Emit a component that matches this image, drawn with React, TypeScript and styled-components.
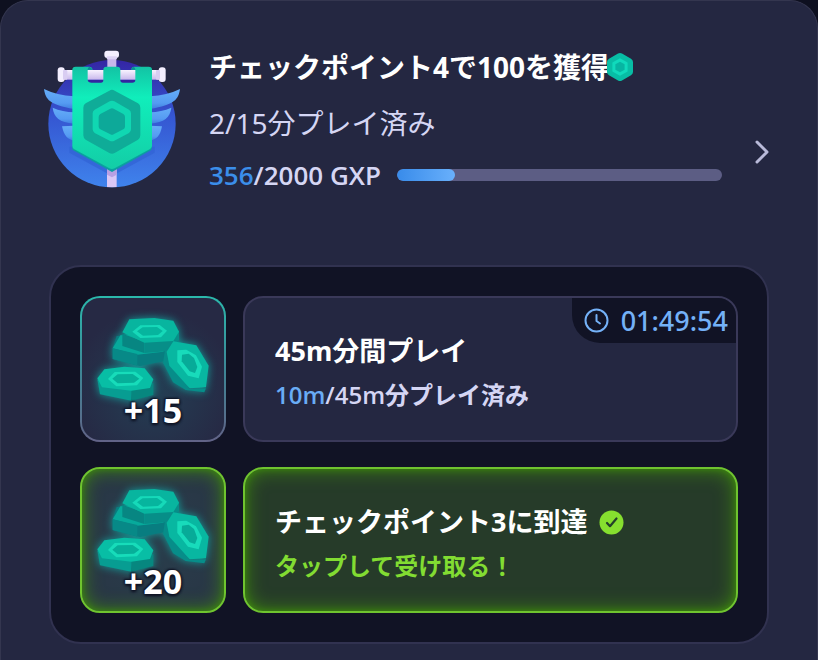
import React from "react";
import styled, { createGlobalStyle, css } from "styled-components";

const GlobalStyle = createGlobalStyle`
  *, *::before, *::after { box-sizing: border-box; }
  body {
    margin: 0;
    background: #0e1020;
    font-family: "Noto Sans", "Noto Sans CJK JP", sans-serif;
    color: #ffffff;
  }
  button { font: inherit; color: inherit; margin: 0; text-align: left; cursor: pointer; }
  h2, p { margin: 0; }
`;

const Sheet = styled.main`
  min-height: 100vh;
  padding: 48px 48px 15px;
  background: #242741;
  border: 1px solid #34364f;
  border-bottom: 0;
  border-radius: 28px 28px 0 0;
`;

const PassButton = styled.button`
  display: flex;
  align-items: flex-start;
  width: 100%;
  padding: 0;
  background: none;
  border: 0;
`;

const BadgeArt = styled.svg`
  flex: none;
  width: 138px;
  height: 138px;
  margin: 1px 0 0 -6px;
`;

const PassBody = styled.span`
  flex: 1;
  display: flex;
  flex-direction: column;
  margin-left: 28px;
`;

const PassTitle = styled.span`
  display: flex;
  align-items: center;
  font-size: 28px;
  line-height: 36px;
  font-weight: 700;
  white-space: nowrap;
`;

const PassPlayed = styled.span`
  margin-top: 20px;
  font-size: 28px;
  line-height: 36px;
  color: #d5d6f4;
`;

const ProgressRow = styled.span`
  display: flex;
  align-items: center;
  gap: 16px;
  margin-top: 16px;
  font-family: "Open Sans", "Noto Sans CJK JP", sans-serif;
  font-size: 26px;
  line-height: 36px;
  font-weight: 600;
  color: #d5d6f4;
  white-space: nowrap;
`;

const Highlight = styled.span<{ $tone: "deep" | "light" }>`
  color: ${({ $tone }) => ($tone === "deep" ? "#3b8eea" : "#69acf5")};
`;

const Track = styled.span`
  flex: 1;
  height: 12px;
  border-radius: 6px;
  background: #5c5d84;
  overflow: hidden;
`;

const Fill = styled.span`
  display: block;
  height: 100%;
  border-radius: 6px;
  background: linear-gradient(90deg, #388bea, #69b0fb);
`;

const Chevron = styled.svg`
  flex: none;
  width: 14px;
  height: 26px;
  margin: 62px 0 0 33px;
  align-self: center;
`;

const HexArt = styled.svg`
  flex: none;
  width: 28px;
  height: 30px;
  margin-left: -3px;
`;

const QuestPanel = styled.section`
  display: grid;
  gap: 25px;
  margin-top: 72px;
  padding: 29px;
  background: #111325;
  border: 2px solid #313250;
  border-radius: 32px;
`;

const QuestRow = styled.div`
  display: grid;
  grid-template-columns: 146px 1fr;
  gap: 17px;
`;

const claimable = css`
  border: 2px solid #6fc42f;
  box-shadow: inset 0 0 20px #3f8a10, inset 0 0 6px #398209;
`;

const RewardTile = styled.div<{ $ready?: boolean }>`
  display: grid;
  height: 146px;
  justify-items: center;
  border: 2px solid transparent;
  border-radius: 20px;
  background:
    radial-gradient(circle at 50% 65%, #243f54, #24385000 70%) padding-box,
    linear-gradient(#262944, #262944) padding-box,
    linear-gradient(#2bb9ac, #3d8796 50%, #626387) border-box;
  ${({ $ready }) =>
    $ready &&
    css`
      background: radial-gradient(circle, #293e4c, #293444);
      ${claimable}
    `}
`;

const CoinsArt = styled.svg`
  grid-area: 1 / 1;
  width: 122px;
  height: 96px;
  margin-top: 14px;
  filter: drop-shadow(0 0 4px #129f9b);
`;

const Amount = styled.span`
  grid-area: 1 / 1;
  align-self: end;
  z-index: 1;
  margin-bottom: 12px;
  font-size: 34px;
  line-height: 36px;
  font-weight: 700;
  text-shadow: 0 0 3px #101525, 1px 1px 2px #101525, -1px -1px 2px #101525, 0 2px 3px #101525;
`;

const cardBase = css`
  display: flex;
  flex-direction: column;
  justify-content: center;
  gap: 8px;
  width: 100%;
  height: 146px;
  padding: 8px 30px 0;
  border-radius: 20px;
`;

const QuestCard = styled.article`
  ${cardBase}
  position: relative;
  overflow: hidden;
  background: #242741;
  border: 2px solid #3a3959;
`;

const ClaimCard = styled.button`
  ${cardBase}
  background: #263b29;
  ${claimable}
`;

const QuestTitle = styled.span`
  display: flex;
  align-items: center;
  gap: 12px;
  font-size: 27px;
  line-height: 36px;
  font-weight: 700;
`;

const QuestNote = styled.span<{ $ready?: boolean }>`
  font-family: "Open Sans", "Noto Sans CJK JP", sans-serif;
  font-size: 24px;
  line-height: 36px;
  font-weight: 600;
  color: ${({ $ready }) => ($ready ? "#82dc32" : "#d5d6f4")};
`;

const Timer = styled.time`
  position: absolute;
  top: 0;
  right: 0;
  display: flex;
  align-items: center;
  gap: 12px;
  height: 45px;
  padding: 0 8px 0 12px;
  border-radius: 0 0 0 28px;
  background: #111325;
  color: #74b1f7;
  font-size: 27px;
  font-weight: 500;
  line-height: 36px;
`;

const RoundIcon = styled.svg`
  flex: none;
  width: 25px;
  height: 25px;
`;

function Badge() {
  return (
    <BadgeArt viewBox="39 60 414 414" aria-hidden="true">
      <defs>
        <linearGradient id="disc" x1="0" y1="0" x2="0" y2="1">
          <stop offset="0" stopColor="#3425a4" />
          <stop offset="0.45" stopColor="#3557d2" />
          <stop offset="1" stopColor="#3f83ec" />
        </linearGradient>
        <linearGradient id="cloth" x1="0" y1="0" x2="0" y2="1">
          <stop offset="0" stopColor="#13c2a4" />
          <stop offset="0.3" stopColor="#10eebb" />
          <stop offset="1" stopColor="#13cda6" />
        </linearGradient>
        <linearGradient id="pole" x1="0" y1="0" x2="0" y2="1">
          <stop offset="0" stopColor="#f8f3ff" />
          <stop offset="1" stopColor="#c9b8ec" />
        </linearGradient>
        <linearGradient id="wing" x1="0" y1="0" x2="0" y2="1">
          <stop offset="0" stopColor="#65adf8" />
          <stop offset="0.7" stopColor="#559bf2" />
          <stop offset="1" stopColor="#3f7fe0" />
        </linearGradient>
        <clipPath id="discClip"><circle cx="246" cy="281" r="191" /></clipPath>
      </defs>
      <circle cx="246" cy="281" r="191" fill="url(#disc)" />
      <g clipPath="url(#discClip)">
        <path d="M118 350V368L246 438L374 368V350Z" fill="#3163d4" opacity="0.7" />
        <rect x="231" y="415" width="29" height="60" fill="#dbc8f6" />
        <path d="M231 415H260V434L246 442L231 434Z" fill="#b9a0e4" />
      </g>
      <g>
        <path d="M96 289C102 317 112 328 132 332V287Z" fill="url(#wing)" />
        <path d="M68 233C72 263 88 277 132 281V247Q98 246 68 233Z" fill="url(#wing)" />
        <path d="M42 177C47 209 58 224 132 237V199Q80 196 42 177Z" fill="url(#wing)" />
      </g>
      <g>
        <path d="M396 289C391 317 380 328 360 332V287Z" fill="url(#wing)" />
        <path d="M424 233C420 263 404 277 360 281V247Q394 246 424 233Z" fill="url(#wing)" />
        <path d="M450 177C445 209 434 224 360 237V199Q412 196 450 177Z" fill="url(#wing)" />
      </g>
      <rect x="232" y="76" width="27" height="48" fill="#c9b6eb" />
      <rect x="223" y="62" width="44" height="22" rx="9" fill="#f4efff" />
      <rect x="230" y="79" width="31" height="9" rx="3" fill="#ddd3f5" />
      <rect x="96" y="120" width="300" height="29" fill="url(#pole)" />
      <rect x="83" y="112" width="21" height="44" rx="9" fill="#f4efff" />
      <rect x="99" y="120" width="13" height="29" rx="3" fill="#d9cdf2" />
      <rect x="386" y="112" width="21" height="44" rx="9" fill="#f4efff" />
      <rect x="378" y="120" width="12" height="29" rx="3" fill="#d9cdf2" />
      <path d="M175 150H316V160H175Z" fill="#3325a1" />
      <path d="M127 347V359L246 426L365 359V347Z" fill="#0b9fa0" />
      <path d="M127 119Q127 110 137 110H178Q186 110 188 119H173V150Q174 158 185 158H213Q220 158 220 150V119Q220 110 229 110H262Q271 110 271 119V150Q271 158 279 158H307Q316 158 316 150V119H304Q304 110 313 110H356Q366 110 366 119V348Q366 353 360 357L254 415Q246 419 238 415L132 357Q127 354 127 348Z" fill="url(#cloth)" />
      <path d="M173 119H188Q184 113 178 110Q173 113 173 119ZM304 119H316Q316 113 311 110Q304 112 304 119Z" fill="#0a8e96" />
      <path d="M238 182Q246 177 254 182L324 220Q331 224 331 233V316Q331 324 324 329L254 369Q246 374 238 369L167 329Q160 324 160 316V233Q160 224 167 220Z" fill="#0fac98" />
      <path d="M239 214Q246 210 253 214L297 239Q303 243 303 250V298Q303 305 297 309L253 332Q246 336 239 332L194 309Q188 305 188 298V250Q188 243 194 239Z" fill="#10d7b2" />
      <path d="M241 236Q246 233 251 236L280 252Q285 255 285 261V290Q285 295 280 298L251 313Q246 316 241 313L211 298Q206 295 206 290V261Q206 255 211 252Z" fill="#0da999" />
    </BadgeArt>
  );
}

function Hex() {
  return (
    <HexArt viewBox="0 0 28 30" aria-hidden="true">
      <path d="M12 1.6Q14 .4 16 1.6L25 6.7Q27 7.9 27 10V20Q27 22.1 25 23.3L16 28.4Q14 29.6 12 28.4L3 23.3Q1 22.1 1 20V10Q1 7.9 3 6.7Z" fill="#08bda5" />
      <path d="M14 6.2L21.6 10.6V19.4L14 23.8L6.4 19.4V10.6Z" fill="#10dabc" />
      <path d="M14 9.7L18.6 12.3V17.7L14 20.3L9.4 17.7V12.3Z" fill="#07b5a2" />
    </HexArt>
  );
}

function Coins() {
  return (
    <CoinsArt viewBox="96 96 366 288" aria-hidden="true">
      <path d="M158 205L170 168L260 164L315 190V243L240 258L158 237Z" fill="#087d80" />
      <path d="M158 205L181 166L250 160L315 195L310 215L232 224Z" fill="#07aa9b" />
      <path d="M158 205L232 222V257L158 237Z" fill="#078987" />
      <path d="M187 161L253 185V219L187 198Z" fill="#078682" />
      <path d="M253 185L340 181L357 150V179L340 212L253 219Z" fill="#078e88" />
      <path d="M187 157L208 118L283 114L340 122L357 155L340 183L253 188Z" fill="#08b59f" />
      <path d="M217 155L241 136L299 135L321 152L303 172L241 174Z" fill="#16d9b9" />
      <path d="M231 154L248 142L291 141L308 153L294 165L249 167Z" fill="#06b59e" />
      <path d="M309 248L315 211L344 181L359 185L331 215L334 255L388 326L438 325L433 337L377 330L339 307Z" fill="#078d89" />
      <path d="M340 184L409 196L446 257L438 322L389 325L328 257L320 215Z" fill="#08b7a1" />
      <path d="M352 211L379 209L408 226L426 260L416 295L384 287L352 246Z" fill="#18dbbb" />
      <path d="M366 224L386 221L402 234L412 261L405 279L389 274L365 244Z" fill="#07ab98" />
      <path d="M112 298L214 329V362L120 343Z" fill="#079d92" />
      <path d="M214 329L280 309V345L214 362Z" fill="#07877f" />
      <path d="M112 295L133 268L193 260L254 265L280 298L270 324L214 332L126 322Z" fill="#08bea5" />
      <path d="M144 297L164 276L226 275L250 294L231 316L169 319Z" fill="#17dcba" />
      <path d="M157 296L173 283L218 282L238 296L222 308L173 310Z" fill="#06af99" />
    </CoinsArt>
  );
}

export default function App() {
  return (
    <>
      <GlobalStyle />
      <Sheet>
        <PassButton type="button">
          <Badge />
          <PassBody>
            <PassTitle>チェックポイント4で100を獲得<Hex /></PassTitle>
            <PassPlayed>2/15分プレイ済み</PassPlayed>
            <ProgressRow>
              <span><Highlight $tone="deep">356</Highlight>/2000 GXP</span>
              <Track role="progressbar" aria-label="GXP" aria-valuemin={0} aria-valuemax={2000} aria-valuenow={356}>
                <Fill style={{ width: `${(356 / 2000) * 100}%` }} />
              </Track>
            </ProgressRow>
          </PassBody>
          <Chevron viewBox="0 0 14 26" aria-hidden="true">
            <path d="M2 3L12 13L2 23" fill="none" stroke="#b9bad9" strokeWidth="3" strokeLinecap="round" strokeLinejoin="round" />
          </Chevron>
        </PassButton>

        <QuestPanel>
          <QuestRow>
            <RewardTile><Coins /><Amount>+15</Amount></RewardTile>
            <QuestCard>
              <QuestTitle as="h2">45m分間プレイ</QuestTitle>
              <QuestNote as="p"><Highlight $tone="light">10m</Highlight>/45m分プレイ済み</QuestNote>
              <Timer>
                <RoundIcon viewBox="0 0 25 25" fill="none" stroke="currentColor" strokeWidth="2" strokeLinecap="round" strokeLinejoin="round" aria-hidden="true">
                  <circle cx="12.5" cy="12.5" r="11" />
                  <path d="M12.5 7V13L16 15.5" />
                </RoundIcon>
                01:49:54
              </Timer>
            </QuestCard>
          </QuestRow>
          <QuestRow>
            <RewardTile $ready><Coins /><Amount>+20</Amount></RewardTile>
            <ClaimCard type="button">
              <QuestTitle>
                チェックポイント3に到達
                <RoundIcon viewBox="0 0 25 25" aria-hidden="true">
                  <circle cx="12.5" cy="12.5" r="12" fill="#86df2f" />
                  <path d="M8 13L11 16.2L17.5 8.5" fill="none" stroke="#24402a" strokeWidth="2.2" strokeLinecap="round" strokeLinejoin="round" />
                </RoundIcon>
              </QuestTitle>
              <QuestNote $ready>タップして受け取る！</QuestNote>
            </ClaimCard>
          </QuestRow>
        </QuestPanel>
      </Sheet>
    </>
  );
}
